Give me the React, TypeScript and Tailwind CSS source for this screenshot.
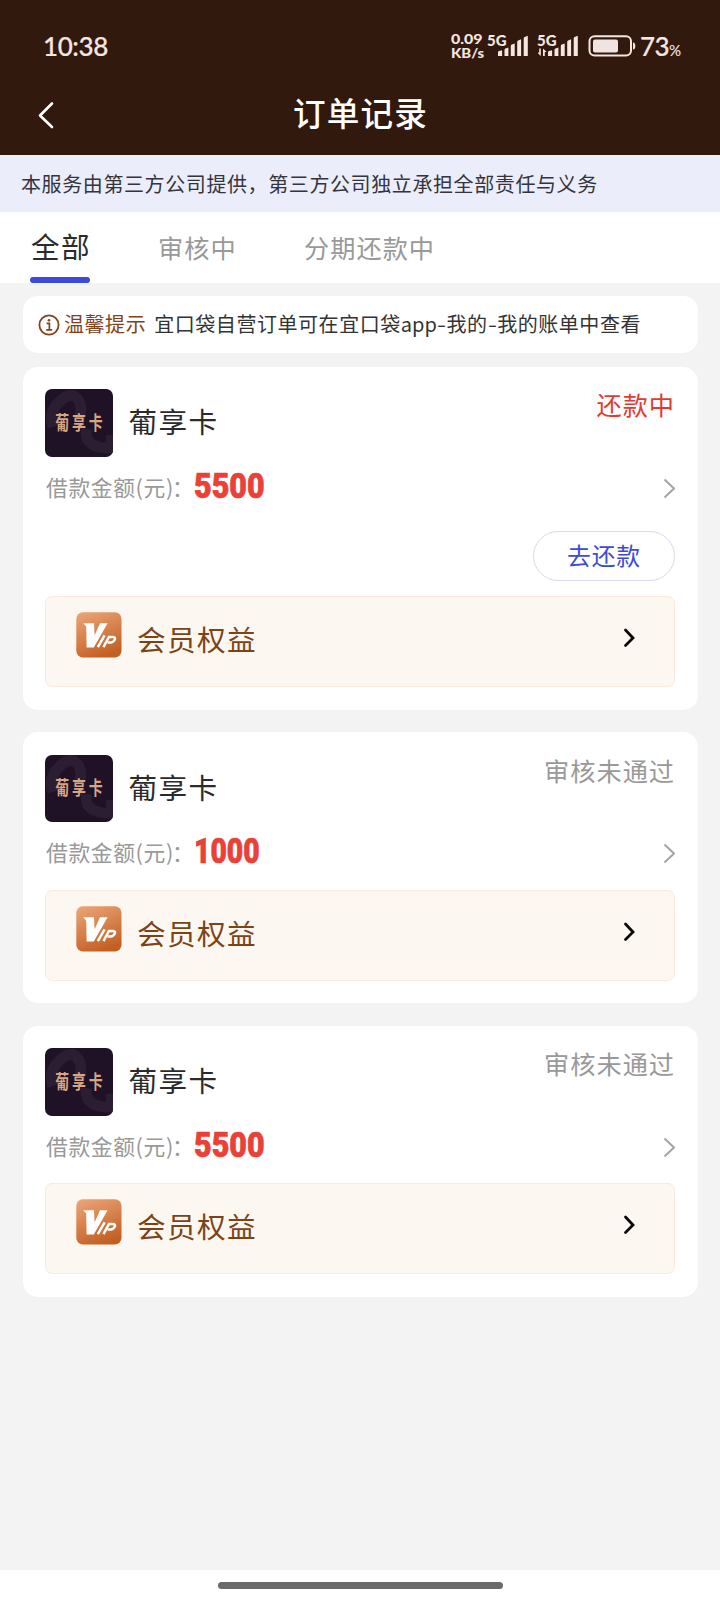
import React from 'react';

type Order = { amount: string; status: string; repay?: boolean };

const orders: Order[] = [
  { amount: '5500', status: '还款中', repay: true },
  { amount: '1000', status: '审核未通过' },
  { amount: '5500', status: '审核未通过' },
];

function Signal({ data }: { data?: boolean }) {
  return (
    <div className="relative h-[24px] w-[42px] shrink-0">
      <span className="absolute -left-px top-px font-[Lato] text-[15px] font-black leading-[12px]">5G</span>
      <svg className="absolute left-0 top-0" width="42" height="24" viewBox="0 0 42 24" fill="#f6e6e0">
        <path d="M10 23v-3.6q0-1 1-1.3l3.1-.9V23zM16.5 23v-6.3q0-1 1-1.3l2.9-1V23zM22.8 23V13q0-1 1-1.4l2.9-1.2V23zM29.2 23V8.8q0-1 1-1.4l2.9-1.2V23zM35.7 23V5.4q0-1 1-1.4l3.1-1.2V23z" />
        {data && <path d="M1.2 15.5h1.6V23L-.8 19.6h2zM5 23V15.5L8.6 19H6.8v4z" />}
      </svg>
    </div>
  );
}

function StatusBar() {
  return (
    <div className="flex h-[74px] items-start pl-[43px] pt-[33px] text-[#f6e6e0]">
      <div className="h-[28px] w-[408px] font-[Lato] text-[26px] font-medium leading-[27px] tracking-[-0.4px] [-webkit-text-stroke:0.2px_#f6e6e0]">
        10:38
      </div>
      <div className="w-[37px] shrink-0 whitespace-nowrap font-[Lato] font-black">
        <div className="origin-left scale-x-[1.18] text-[13.5px] leading-[13px]">0.09</div>
        <div className="origin-left scale-x-[1.1] text-[13.5px] leading-[14px]">KB/s</div>
      </div>
      <Signal />
      <div className="w-[8px] shrink-0" />
      <Signal data />
      <svg className="ml-[8px] mt-px shrink-0" width="50" height="24" viewBox="0 0 50 24">
        <rect x="1.5" y="2.2" width="41.5" height="19.3" rx="5" fill="none" stroke="#f6e6e0" strokeWidth="2" />
        <rect x="5" y="5.5" width="25" height="13" rx="2" fill="#f0e4e2" />
        <path d="M45 8.5q2.3 0 2.3 3.5T45 15.5z" fill="#f6e6e0" />
      </svg>
      <div className="ml-[2px] flex items-baseline font-[Lato] leading-[27px]">
        <span className="text-[26px] font-medium tracking-[-0.6px] [-webkit-text-stroke:0.2px_#f6e6e0]">73</span>
        <span className="text-[15px] font-medium">%</span>
      </div>
    </div>
  );
}

function Logo() {
  return (
    <div className="flex h-[67.5px] w-[67.5px] shrink-0 items-center justify-center overflow-hidden rounded-[7px] bg-[#1f1126]">
      <svg width="68" height="68" viewBox="0 0 68 68">
        <g fill="none" stroke="#2b1e32" strokeWidth="11">
          <path d="M8 38Q3 24 14 13T32 9t2 24" />
          <path d="M42 40q-2 10 5 15t20 4V46" />
        </g>
        <text
          transform="translate(10.2 41) scale(0.8 1.1)"
          fill="#d8a583"
          className="font-['Noto_Sans_CJK_SC',sans-serif] text-[17.5px] font-bold tracking-[3.7px]"
        >
          葡享卡
        </text>
      </svg>
    </div>
  );
}

function VipIcon() {
  return (
    <svg width="46" height="46" viewBox="0 0 46 46" className="shrink-0">
      <defs>
        <linearGradient id="vip" x1="0.2" y1="0" x2="0.6" y2="1">
          <stop offset="0" stopColor="#e9a273" />
          <stop offset="1" stopColor="#c25f22" />
        </linearGradient>
      </defs>
      <rect x="0.3" y="0.3" width="45.2" height="45.2" rx="6.5" fill="url(#vip)" />
      <path d="M7.2 11.3H18l.6 12 5.4-12H31.6L17.8 35.5H10.6L10.2 14.6z" fill="#fff" />
      <path
        d="M28.6 23.4 21.8 35.2M27.4 35.2l5.6-10.2h4q3 .3 1.6 3-1.3 2.4-4 2.4h-3"
        fill="none"
        stroke="#fff"
        strokeWidth="2.5"
      />
    </svg>
  );
}

function Amount({ value }: { value: string }) {
  return (
    <div
      className={`origin-left font-[Roboto] text-[35px] font-black leading-[59px] text-[#e94138] [-webkit-text-stroke:0.7px_#e94138] ${
        value.startsWith('1') ? 'scale-x-[0.81]' : 'scale-x-[0.87]'
      }`}
    >
      {value}
    </div>
  );
}

function OrderCard({ amount, status, repay }: Order) {
  return (
    <div className="rounded-[15px] bg-white p-[22.5px]">
      <div className="flex items-start">
        <Logo />
        <div className="ml-[16px] h-[67.5px] text-[28.6px] leading-[64px] tracking-[1.4px] text-[#2b2b2b]">葡享卡</div>
        <div className={`ml-auto text-[25.2px] leading-[31px] tracking-[1px] ${repay ? 'text-[#e23b33]' : 'text-[#999999]'}`}>
          {status}
        </div>
      </div>
      <div className="flex h-[67.5px] items-start">
        <div className="w-[149px] whitespace-nowrap pl-[1px] text-[21.8px] leading-[60px] tracking-[0.6px] text-[#999999]">
          借款金额(元)<span className="-ml-[2px]">：</span>
        </div>
        <Amount value={amount} />
        <svg className="ml-auto mt-[21px]" width="13" height="22" viewBox="0 0 13 22" fill="none" stroke="#a5a5a5" strokeWidth="2">
          <path d="M2.5 1.5 12 10.5l-9.5 9" />
        </svg>
      </div>
      {repay && (
        <div className="mb-[15.5px] mt-[6.5px] flex justify-end">
          <button className="h-[50px] w-[142px] rounded-full border border-[#dadbee] pb-[3px] text-[23.8px] leading-[46px] tracking-[0.8px] text-[#3b4bd6]">
            去还款
          </button>
        </div>
      )}
      <div className="flex h-[91px] items-start rounded-[7px] border-[1.5px] border-[#fbebdf] bg-[#fdf7f1] pl-[30px]">
        <div className="mt-[15px]">
          <VipIcon />
        </div>
        <div className="ml-[15px] text-[28.6px] leading-[84px] tracking-[1.4px] text-[#7c4316]">会员权益</div>
        <svg className="ml-auto mr-[38px] mt-[30px]" width="14" height="22" viewBox="0 0 14 22" fill="none" stroke="#0b0b0b" strokeWidth="2.8" strokeLinecap="round">
          <path d="M3.5 3 11 11l-7.5 7.5" />
        </svg>
      </div>
    </div>
  );
}

function Dash() {
  return <span className="inline-block w-[9.6px] origin-left scale-x-[1.3]">-</span>;
}

export default function App() {
  return (
    <div className="flex h-[1600px] w-[720px] flex-col overflow-hidden bg-[#f3f3f3] font-['Noto_Sans_CJK_SC',sans-serif]">
      <header className="h-[155px] shrink-0 bg-[#32190d]">
        <StatusBar />
        <div className="grid h-[81px] grid-cols-[1fr_auto_1fr] items-center pl-[37px] pr-[37px]">
          <svg width="18" height="28" viewBox="0 0 18 28" fill="none" stroke="#fff" strokeWidth="2.6" strokeLinecap="round" strokeLinejoin="round">
            <path d="M15 2.5 3 14.5 15 26" />
          </svg>
          <h1 className="pb-[6px] pl-[1px] text-[32.6px] font-medium leading-[50px] tracking-[1.2px] text-white">订单记录</h1>
        </div>
      </header>
      <div className="h-[57px] shrink-0 whitespace-nowrap bg-[#ebedfb] pl-[21px] text-[20px] leading-[57px] tracking-[0.6px] text-[#33343c]">
        本服务由第三方公司提供，第三方公司独立承担全部责任与义务
      </div>
      <nav className="flex h-[71px] shrink-0 bg-white pl-[30px] text-[25.2px] tracking-[1px] text-[#999999]">
        <div className="flex w-[60px] flex-col justify-between text-[28.6px] leading-[68px] tracking-[1.4px] text-[#2b2b2b]">
          <span className="h-[65px] whitespace-nowrap pl-[1px]">全部</span>
          <span className="h-[6px] rounded-full bg-[#3d4bdd]" />
        </div>
        <span className="ml-[68px] leading-[70px]">审核中</span>
        <span className="ml-[67.5px] leading-[70px]">分期还款中</span>
      </nav>
      <main className="flex flex-1 flex-col px-[22.5px] pt-[13px]">
        <div className="flex h-[56.5px] shrink-0 items-center whitespace-nowrap rounded-[15px] bg-white pl-[15px] text-[20px] leading-[54px] tracking-[0.55px] text-[#333333]">
          <svg className="mt-[2px]" width="22" height="22" viewBox="0 0 22 22" fill="none" stroke="#80431c" strokeWidth="1.8">
            <circle cx="11" cy="11" r="9.6" />
            <path d="M8.6 9.4h2.8v6.2M8.2 15.8h6" strokeWidth="1.7" />
            <circle cx="11" cy="6.2" r="1.3" fill="#80431c" stroke="none" />
          </svg>
          <span className="ml-[4.5px] pb-px text-[#80431c]">温馨提示</span>
          <span className="ml-[8px] pb-px">
            宜口袋自营订单可在宜口袋<span className="tracking-normal">app</span>
            <Dash />
            我的
            <Dash />
            我的账单中查看
          </span>
        </div>
        <div className="mt-[14px] flex flex-col gap-[22.5px]">
          {orders.map((order, i) => (
            <OrderCard key={i} {...order} />
          ))}
        </div>
      </main>
      <footer className="flex h-[30px] shrink-0 justify-center bg-white pt-[12px]">
        <div className="h-[7px] w-[285px] rounded-full bg-[#6a6a6a]" />
      </footer>
    </div>
  );
}
